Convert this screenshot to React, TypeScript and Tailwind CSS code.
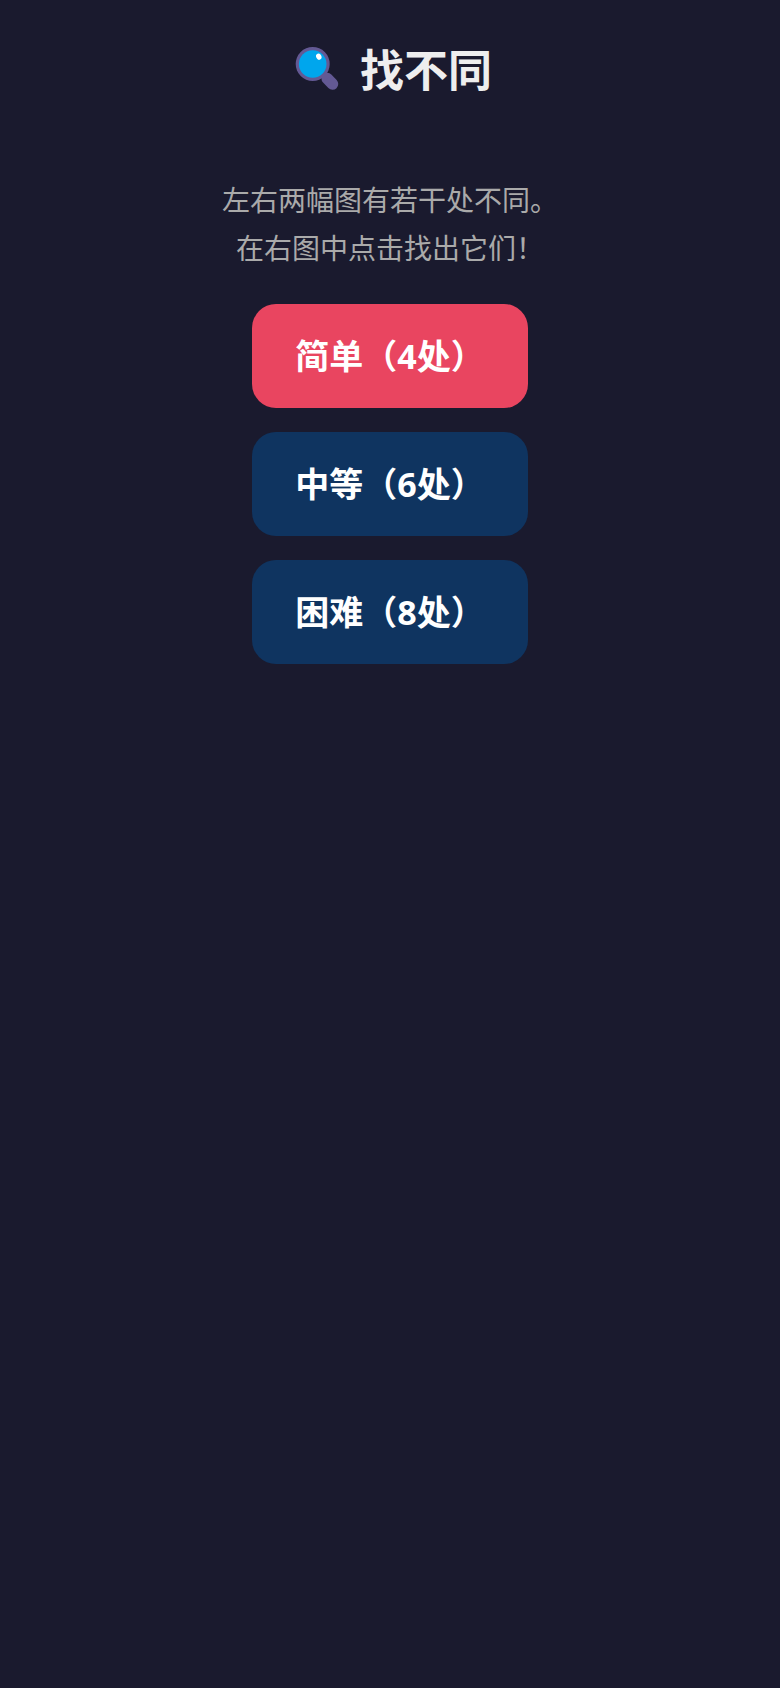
import React, { useState } from 'react';

type Level = {
  id: string;
  label: string;
  count: number;
};

const LEVELS: Level[] = [
  { id: 'easy', label: '简单', count: 4 },
  { id: 'medium', label: '中等', count: 6 },
  { id: 'hard', label: '困难', count: 8 },
];

const MagnifierIcon: React.FC = () => (
  <svg viewBox="0 0 60 60" className="h-15 w-15 shrink-0" aria-hidden="true">
    <path d="M39.2 38.5 L44.5 44" stroke="#635994" strokeWidth="11.5" strokeLinecap="round" />
    <path d="M33 33 L39 39" stroke="#635994" strokeWidth="5" />
    <circle cx="24.7" cy="24" r="17" fill="#635994" />
    <circle cx="24.7" cy="24" r="13.8" fill="#00a6ed" />
    <ellipse cx="30.8" cy="16.7" rx="2.6" ry="3.2" fill="#fff" transform="rotate(-25 30.8 16.7)" />
  </svg>
);

const LevelButton: React.FC<{ level: Level; selected: boolean; onSelect: () => void }> = ({
  level,
  selected,
  onSelect,
}) => (
  <button
    type="button"
    aria-pressed={selected}
    onClick={onSelect}
    className={`w-full cursor-pointer rounded-3xl py-7 text-center text-[34px] leading-12 font-bold whitespace-nowrap text-white ${
      selected ? 'bg-[#e94560]' : 'bg-[#0f3460]'
    }`}
  >
    {`${level.label}（${level.count}处）`}
  </button>
);

const App: React.FC = () => {
  const [selectedId, setSelectedId] = useState('easy');

  return (
    <main
      lang="zh-CN"
      className="flex min-h-screen flex-col items-center bg-[#1a1a2e] px-6 py-10 font-['Open_Sans','Noto_Sans_CJK_SC',sans-serif] text-[#eee]"
    >
      <h1 className="flex items-center gap-3 text-[44px] leading-15 font-bold">
        <MagnifierIcon />
        找不同
      </h1>

      <p className="mt-19 text-center text-[28px] leading-12 text-[#aaa]">
        左右两幅图有若干处不同。
        <br />
        在右图中点击找出它们！
      </p>

      <div className="mt-8 flex w-69 max-w-full flex-col gap-6">
        {LEVELS.map((level) => (
          <LevelButton
            key={level.id}
            level={level}
            selected={level.id === selectedId}
            onSelect={() => setSelectedId(level.id)}
          />
        ))}
      </div>
    </main>
  );
};

export default App;
